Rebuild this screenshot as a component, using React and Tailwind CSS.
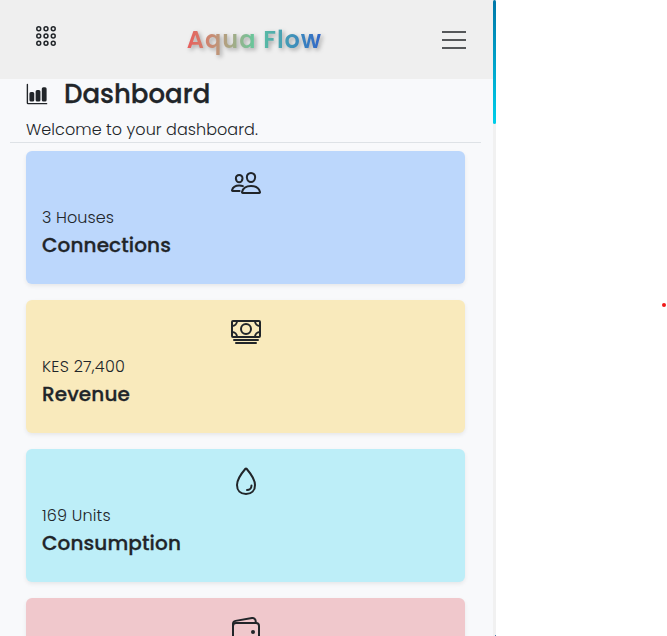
import {
  IoPeopleOutline,
  IoCashOutline,
  IoWaterOutline,
  IoWalletOutline,
  IoBarChart,
} from "react-icons/io5";

const cards = [
  { Icon: IoPeopleOutline, value: "3 Houses", title: "Connections", color: "bg-[#bcd7fc]", vs: "tracking-[0.1px]" },
  { Icon: IoCashOutline, value: "KES 27,400", title: "Revenue", color: "bg-[#f9eabc]", vs: "tracking-[0.25px]" },
  { Icon: IoWaterOutline, value: "169 Units", title: "Consumption", color: "bg-[#bdeef8]", vs: "tracking-[0.15px]" },
  { Icon: IoWalletOutline, color: "bg-[#f0c8cc]" },
];

function GridDots() {
  return (
    <svg className="size-5" viewBox="0 0 20 20" fill="none" stroke="#212529" strokeWidth="1.5">
      {[2.75, 10, 17.25].map((y) =>
        [2.75, 10, 17.25].map((x) => <circle key={`${x}-${y}`} cx={x} cy={y} r="1.95" />)
      )}
    </svg>
  );
}

function Card({ Icon, value, title, color, vs }) {
  return (
    <section className={`flex h-[133px] shrink-0 flex-col rounded-md p-4 shadow-[0_2px_4px_rgba(0,0,0,0.075)] ${color}`}>
      <Icon className="size-8 shrink-0 self-center" />
      {value && <p className={`mt-[7px] self-start whitespace-nowrap text-base leading-6 font-light ${vs}`}>{value}</p>}
      {title && <h2 className="mt-[3px] self-start whitespace-nowrap text-xl leading-6 font-medium tracking-[0.12px] [-webkit-text-stroke:0.3px_#212529]">{title}</h2>}
    </section>
  );
}

export default function App() {
  return (
    <div className="relative flex h-[636px] w-[667px] overflow-hidden bg-white font-[Poppins,Inter,sans-serif] text-[#212529]">
      <main className="flex h-full w-[493px] flex-col overflow-hidden bg-[#f8f9fb]">
        <header className="flex h-[79px] shrink-0 items-center justify-between bg-[#efefef] pr-[27px] pl-9">
          <span className="-mt-[7px]"><GridDots /></span>
          <span className="ml-[11px] whitespace-nowrap bg-linear-to-r from-[#e85c5c] via-[#62c79b] to-[#3264c8] bg-clip-text text-2xl font-semibold tracking-[1px] text-transparent drop-shadow-[2px_2px_2px_rgba(0,0,0,0.3)]">
            Aqua Flow
          </span>
          <span className="flex w-6 flex-col gap-1.5">
            <i className="h-0.5 bg-[#555759]" />
            <i className="h-0.5 bg-[#555759]" />
            <i className="h-0.5 bg-[#555759]" />
          </span>
        </header>
        <div className="ml-2.5 h-16 w-[471px] shrink-0 border-b border-[#dee2e6] pl-4">
          <h1 className="flex h-[31px] items-center text-[26px] font-medium">
            <IoBarChart className="-mt-0.5 mr-4 size-[22px]" />
            <span className="[-webkit-text-stroke:0.3px_#212529]">Dashboard</span>
          </h1>
          <p className="mt-2 text-base leading-6 font-light tracking-[0.05px]">Welcome to your dashboard.</p>
        </div>
        <div className="ml-[26px] flex w-[439px] flex-col gap-4 pt-2">
          {cards.map((card) => <Card key={card.color} {...card} />)}
        </div>
      </main>
      <div className="flex h-full w-[3px] flex-col justify-between bg-[#f1f1f1]">
        <div className="h-[124px] rounded-[2px] bg-linear-to-b from-[#0077a8] to-[#00cfea]" />
        <div className="size-px self-end bg-[#4a7fae]" />
      </div>
      <span className="absolute top-[303px] left-[662px] size-[4px] rounded-full bg-[#f01818]" />
    </div>
  );
}
